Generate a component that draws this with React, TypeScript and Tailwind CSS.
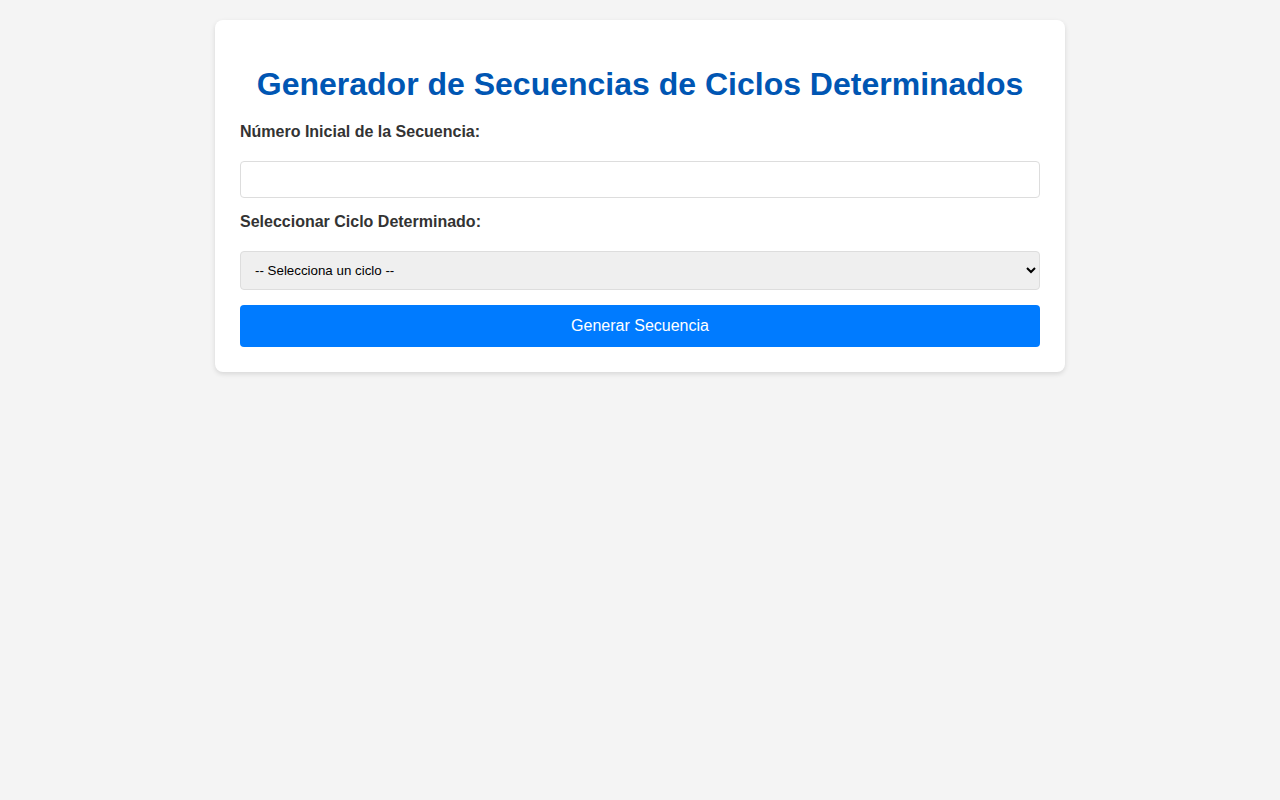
export default function App() {
  return (
    <div className="min-h-screen bg-[#f4f4f4] pt-5 font-['Liberation_Sans',Arial,sans-serif]">
      {/* Card */}
      <div className="mx-auto w-[850px] rounded-lg bg-white p-[25px] shadow-[0_2px_5px_rgba(0,0,0,0.12)]">
        <h1 className="mt-[21px] mb-[20px] text-center text-[32px] leading-[37px] font-bold text-[#0056b3]">
          Generador de Secuencias de Ciclos Determinados
        </h1>

        <label className="block text-[16px] leading-[18px] font-bold text-[#333]">
          Número Inicial de la Secuencia:
        </label>
        <input
          type="number"
          className="mt-[20px] block h-[37px] w-full rounded border border-[#ddd] px-2 text-[16px] outline-none"
        />

        <label className="mt-[15px] block text-[16px] leading-[18px] font-bold text-[#333]">
          Seleccionar Ciclo Determinado:
        </label>
        <select className="mt-[20px] block h-[39px] w-full rounded border border-[#ddd] bg-[#efefef] px-[10px] font-['Liberation_Sans',Arial,sans-serif] text-[13.33px] text-black">
          <option>-- Selecciona un ciclo --</option>
        </select>

        <button className="mt-[15px] block h-[42px] w-full rounded bg-[#007bff] text-[16px] text-white">
          Generar Secuencia
        </button>
      </div>
    </div>
  );
}
